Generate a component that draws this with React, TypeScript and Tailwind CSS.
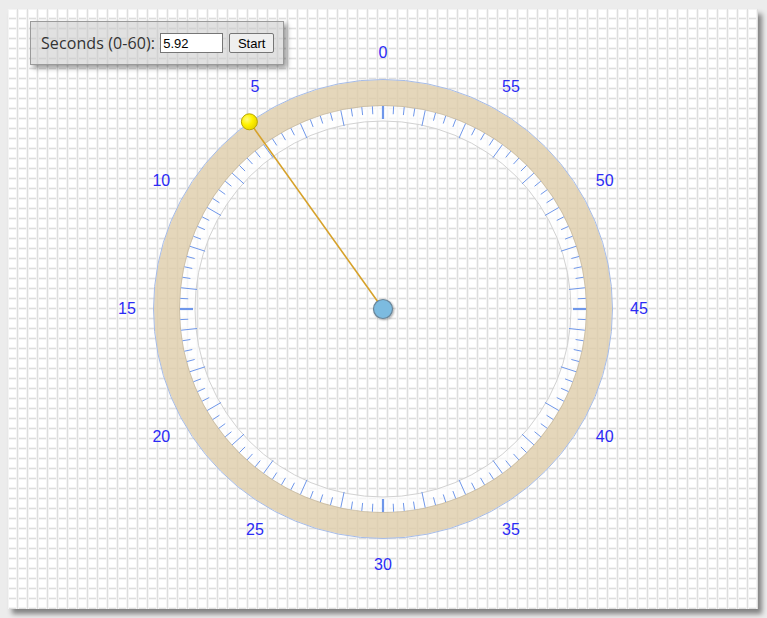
import type React from "react";

const CX = 375;
const CY = 300;
const SECONDS = 5.92;

// point on the dial, angle measured counter-clockwise from the top, in degrees
const pt = (deg: number, r: number) => {
  const a = (deg * Math.PI) / 180;
  return { x: CX - r * Math.sin(a), y: CY - r * Math.cos(a) };
};

const annulus = (r1: number, r2: number) =>
  `M ${CX - r1} ${CY} a ${r1} ${r1} 0 1 0 ${r1 * 2} 0 a ${r1} ${r1} 0 1 0 ${-r1 * 2} 0 Z ` +
  `M ${CX - r2} ${CY} a ${r2} ${r2} 0 1 0 ${r2 * 2} 0 a ${r2} ${r2} 0 1 0 ${-r2 * 2} 0 Z`;

const Dial: React.FC = () => {
  const ticks = Array.from({ length: 120 }, (_, i) => {
    const deg = i * 3;
    const thick = i % 30 === 0;
    const long = i % 4 === 0;
    const inner = thick ? 190 : long ? 187 : 195;
    const a = pt(deg, 203);
    const b = pt(deg, inner);
    return (
      <line
        key={i}
        x1={a.x}
        y1={a.y}
        x2={b.x}
        y2={b.y}
        stroke="#6f97ea"
        strokeWidth={thick ? 2.2 : 1}
      />
    );
  });

  const labels = Array.from({ length: 12 }, (_, i) => {
    const p = pt(i * 30, 256);
    return (
      <text
        key={i}
        x={p.x}
        y={p.y - 1}
        textAnchor="middle"
        dominantBaseline="central"
        fill="#2b2bf5"
        fontSize="16"
        fontFamily='"Liberation Sans", Arial, sans-serif'
      >
        {i * 5}
      </text>
    );
  });

  const tip = pt(SECONDS * 6, 230);

  return (
    <svg width="750" height="600" viewBox="0 0 750 600" className="block">
      <defs>
        <radialGradient id="ball" cx="0.35" cy="0.35" r="0.7">
          <stop offset="0" stopColor="#fffb80" />
          <stop offset="0.5" stopColor="#fff200" />
          <stop offset="1" stopColor="#e6d200" />
        </radialGradient>
        <filter id="soft" x="-50%" y="-50%" width="200%" height="200%">
          <feDropShadow dx="1" dy="1" stdDeviation="1.2" floodColor="#000" floodOpacity="0.35" />
        </filter>
      </defs>
      <path d={annulus(203, 188)} fill="rgba(255,255,255,0.65)" fillRule="evenodd" />
      <circle cx={CX} cy={CY} r={188} fill="none" stroke="#d2d2d2" strokeWidth="1" />
      <path d={annulus(229, 203)} fill="rgba(222,204,168,0.78)" fillRule="evenodd" />
      <circle cx={CX} cy={CY} r={203.5} fill="none" stroke="rgba(160,150,130,0.35)" strokeWidth="1" />
      <circle cx={CX} cy={CY} r={229.5} fill="none" stroke="#a6bbe6" strokeWidth="1" />
      {ticks}
      {labels}
      <line x1={CX} y1={CY} x2={tip.x} y2={tip.y} stroke="#d6a12a" strokeWidth="1.6" />
      <circle cx={tip.x} cy={tip.y} r="8" fill="url(#ball)" stroke="#b9a600" strokeWidth="1" />
      <circle cx={CX} cy={CY} r="9.5" fill="#7bbbe0" stroke="#6a8599" strokeWidth="1.2" filter="url(#soft)" />
    </svg>
  );
};

export default function App() {
  return (
    <div className="min-h-[618px] w-full bg-[#ececec] pl-2 pt-[9px]">
      <div
        className="relative h-[600px] w-[750px] bg-white shadow-[4px_5px_5px_rgba(0,0,0,0.45)]
          bg-[linear-gradient(to_right,#f4f4f4_0px,#f4f4f4_1px,#dedede_1px,#dedede_2px,#f4f4f4_2px,#f4f4f4_3px,transparent_3px),linear-gradient(to_bottom,#f4f4f4_0px,#f4f4f4_1px,#dedede_1px,#dedede_2px,#f4f4f4_2px,#f4f4f4_3px,transparent_3px)]
          bg-[size:10px_10px] bg-[position:8px_8px]"
      >
        <Dial />
        <div
          className="absolute left-[22px] top-[12px] flex h-[44px] w-[254px] items-center border border-[#9a9a9a]
            bg-[rgba(200,200,200,0.55)] pl-[10px] shadow-[3px_3px_5px_rgba(0,0,0,0.4)]"
        >
          <span className="font-['Open_Sans',sans-serif] text-[16px] tracking-[0.1px] text-[#333]">Seconds (0-60):</span>
          <input
            defaultValue="5.92"
            className="ml-[5px] h-[20px] w-[63px] border border-[#767676] bg-white px-[2px] font-['Liberation_Sans',Arial,sans-serif] text-[13px] text-black outline-none"
          />
          <button className="ml-[6px] h-[20px] w-[45px] rounded-[2px] border border-[#767676] bg-[#efefef] font-['Liberation_Sans',Arial,sans-serif] text-[13px] text-black">
            Start
          </button>
        </div>
      </div>
    </div>
  );
}
